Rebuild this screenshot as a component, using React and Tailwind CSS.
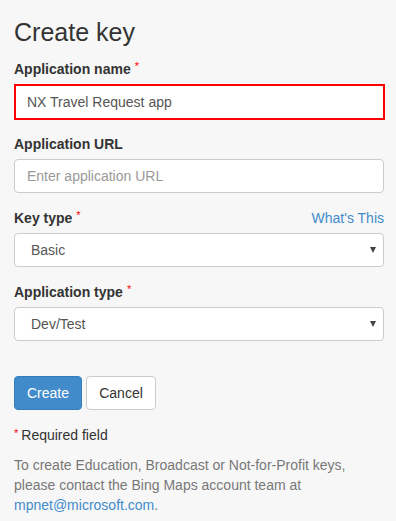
import { useState } from 'react';

const font = { fontFamily: '"Liberation Sans", Arial, sans-serif' };

function Label({ children, required }) {
  return (
    <label className="block mb-[5px] text-[14px] leading-[20px] font-bold text-[#333]">
      {children}
      {required && <span className="text-[#f00] font-normal text-[11px] align-top relative -top-[3px] ml-[4px]">*</span>}
    </label>
  );
}

function Select({ value, options, onChange }) {
  return (
    <div className="relative">
      <select
        value={value}
        onChange={e => onChange(e.target.value)}
        className="w-full h-[34px] appearance-none bg-white border border-[#ccc] rounded-[4px] pl-[16px] pr-8 text-[14px] text-[#555] outline-none"
        style={font}
      >
        {options.map(o => <option key={o}>{o}</option>)}
      </select>
      <span className="pointer-events-none absolute right-[8px] top-[14px] w-0 h-0 border-l-[3px] border-r-[3px] border-t-[6px] border-l-transparent border-r-transparent border-t-[#444]" />
    </div>
  );
}

export default function App() {
  const [form, setForm] = useState({ name: 'NX Travel Request app', url: '', keyType: 'Basic', appType: 'Dev/Test' });

  const handleChange = e => setForm({ ...form, [e.target.name]: e.target.value });

  return (
    <div className="min-h-[521px] w-[396px] bg-[#f7f7f7] px-[14px] pt-[17px]" style={font}>
      <h3 className="text-[25px] leading-[30px] text-[#333] mb-[12px]">Create key</h3>
      <form onSubmit={e => e.preventDefault()}>
        <div className="mb-[14px]">
          <Label required>Application name</Label>
          <input
            name="name"
            value={form.name}
            onChange={handleChange}
            className="block w-[371px] h-[36px] bg-white border-2 border-[#f00] px-[11px] text-[14px] text-[#555] outline-none"
            style={font}
          />
        </div>
        <div className="mb-[15px]">
          <Label>Application URL</Label>
          <input
            name="url"
            value={form.url}
            onChange={handleChange}
            placeholder="Enter application URL"
            className="block w-[370px] h-[34px] bg-white border border-[#ccc] rounded-[4px] px-[12px] text-[14px] text-[#555] placeholder:text-[#999] outline-none"
            style={font}
          />
        </div>
        <div className="mb-[15px] w-[370px]">
          <div className="flex items-start justify-between">
            <Label required>Key type</Label>
            <a href="#" className="text-[14px] leading-[20px] text-[#428bca]">What's This</a>
          </div>
          <Select value={form.keyType} options={['Basic', 'Enterprise']} onChange={v => setForm({ ...form, keyType: v })} />
        </div>
        <div className="w-[370px]">
          <Label required>Application type</Label>
          <Select value={form.appType} options={['Dev/Test', 'Public website', 'Mobile']} onChange={v => setForm({ ...form, appType: v })} />
        </div>
        <div className="flex gap-[4px] mt-[35px]">
          <button type="submit" className="h-[34px] w-[68px] bg-[#428bca] border border-[#357ebd] rounded-[4px] text-white text-[14px]">Create</button>
          <button type="button" className="h-[34px] w-[70px] bg-white border border-[#ccc] rounded-[4px] text-[#333] text-[14px]">Cancel</button>
        </div>
      </form>
      <p className="mt-[15px] text-[14px] leading-[20px] text-[#333]">
        <span className="text-[#f00] text-[11px] align-top relative -top-[2px] mr-[3px]">*</span>Required field
      </p>
      <p className="mt-[10px] text-[14px] leading-[20px] text-[#777]">
        To create Education, Broadcast or Not-for-Profit keys, please contact the Bing Maps account team at{' '}
        <a href="#" className="text-[#428bca]">mpnet@microsoft.com</a>.
      </p>
    </div>
  );
}
